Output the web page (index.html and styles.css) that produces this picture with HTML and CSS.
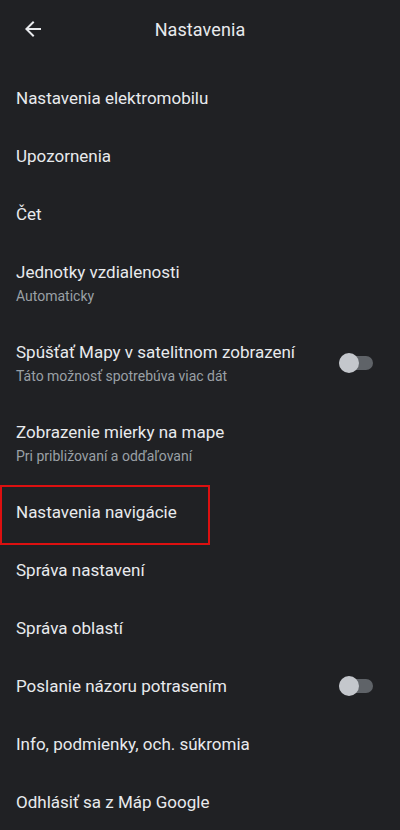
FILE: index.html
```
<!DOCTYPE html>
<html lang="sk">
<head>
<meta charset="utf-8">
<title>Nastavenia</title>
<link rel="stylesheet" href="styles.css">
</head>
<body>
<div class="app">
  <header class="topbar">
    <div class="back">
      <svg width="24" height="24" viewBox="0 0 24 24"><path d="M20 11H7.83l5.59-5.59L12 4l-8 8 8 8 1.41-1.41L7.83 13H20v-2z" fill="#e8eaed"/></svg>
    </div>
    <h1 class="title">Nastavenia</h1>
    <div></div>
  </header>
  <ul class="list">
    <li class="row"><span class="label">Nastavenia elektromobilu</span></li>
    <li class="row"><span class="label">Upozornenia</span></li>
    <li class="row"><span class="label">Čet</span></li>
    <li class="row two"><div class="text"><span class="label">Jednotky vzdialenosti</span><span class="sub">Automaticky</span></div></li>
    <li class="row two"><div class="text"><span class="label">Spúšťať Mapy v satelitnom zobrazení</span><span class="sub">Táto možnosť spotrebúva viac dát</span></div><span class="toggle"><span class="thumb"></span></span></li>
    <li class="row two"><div class="text"><span class="label">Zobrazenie mierky na mape</span><span class="sub">Pri približovaní a odďaľovaní</span></div></li>
    <li class="row marked"><span class="label">Nastavenia navigácie</span></li>
    <li class="row"><span class="label">Správa nastavení</span></li>
    <li class="row"><span class="label">Správa oblastí</span></li>
    <li class="row"><span class="label">Poslanie názoru potrasením</span><span class="toggle"><span class="thumb"></span></span></li>
    <li class="row"><span class="label">Info, podmienky, och. súkromia</span></li>
    <li class="row"><span class="label">Odhlásiť sa z Máp Google</span></li>
  </ul>
</div>
</body>
</html>
```
FILE: styles.css
```
html, body {
  margin: 0;
  padding: 0;
  background: #202124;
}
body {
  font-family: Roboto, "Noto Sans", "Liberation Sans", sans-serif;
  color: #e8eaed;
  width: 400px;
  height: 830px;
  overflow: hidden;
}
.app {
  display: flex;
  flex-direction: column;
}
.topbar {
  display: grid;
  grid-template-columns: 56px 1fr 56px;
  align-items: center;
  height: 58px;
}
.back {
  display: flex;
  align-items: center;
  padding-left: 21px;
  height: 24px;
}
.back svg {
  display: block;
}
.title {
  margin: 0;
  text-align: center;
  font-size: 18px;
  font-weight: 400;
  color: #e8eaed;
  letter-spacing: 0.1px;
}
.list {
  list-style: none;
  margin: 0;
  padding: 11px 0 0;
}
.row {
  position: relative;
  display: flex;
  align-items: center;
  justify-content: space-between;
  height: 58px;
  padding: 0 27px 0 16px;
  box-sizing: border-box;
}
.row.two {
  height: 80px;
}
.text {
  display: flex;
  flex-direction: column;
}
.label {
  font-size: 17px;
  line-height: 24px;
  color: #e8eaed;
}
.sub {
  font-size: 14px;
  line-height: 20px;
  margin-top: 2px;
  color: #9aa0a6;
}
.toggle {
  position: relative;
  width: 34px;
  height: 14px;
  border-radius: 7px;
  background: #5f6368;
  flex: none;
}
.thumb {
  position: absolute;
  left: 0;
  top: -3px;
  width: 20px;
  height: 20px;
  border-radius: 50%;
  background: #c4c7cc;
}
.marked::after {
  content: "";
  position: absolute;
  left: 0;
  top: 2px;
  width: 210px;
  height: 60px;
  box-sizing: border-box;
  border: 2px solid #dc1010;
  pointer-events: none;
}
```
